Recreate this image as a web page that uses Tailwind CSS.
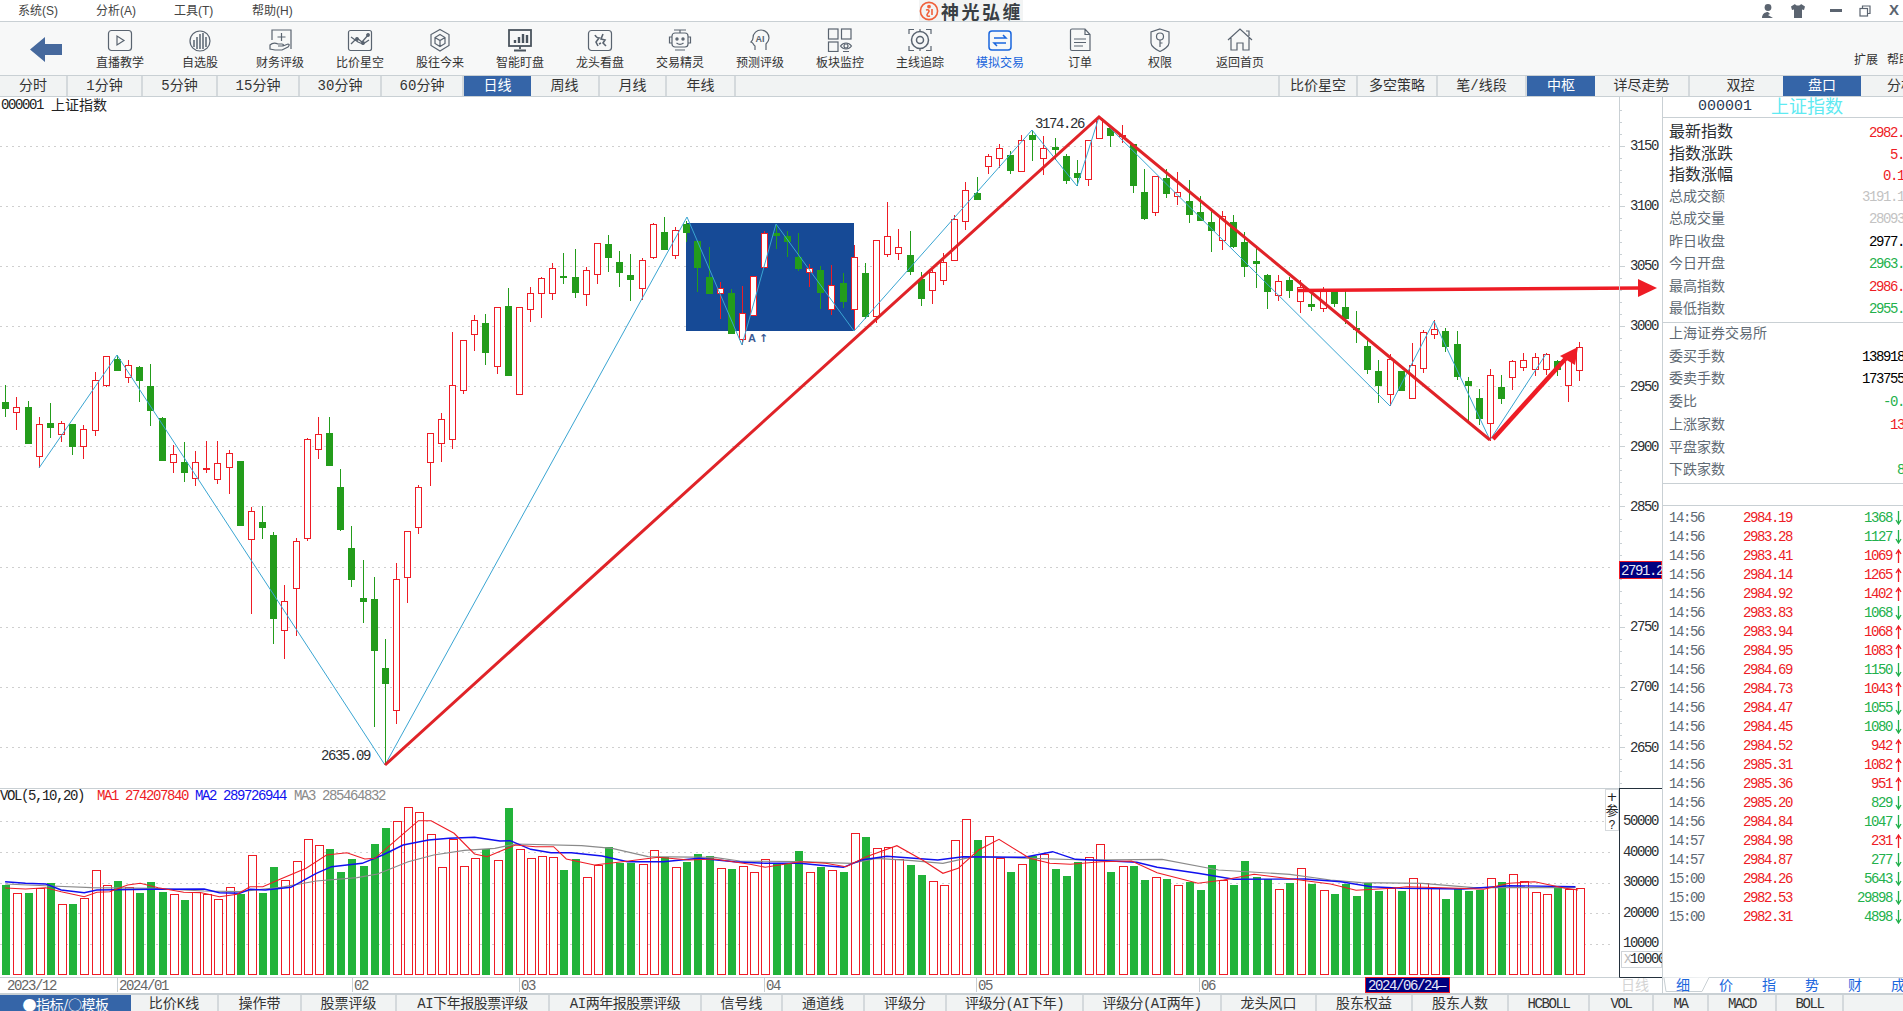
<!DOCTYPE html>
<html lang="zh">
<head>
    <meta charset="UTF-8">
    <title>神光弘缠</title>
    <script src="https://cdn.jsdelivr.net/npm/@tailwindcss/browser@4"></script>
</head>
<body class="h-[1011px] w-[1903px] overflow-hidden bg-white flex flex-col text-[#333] [font-family:'Liberation_Mono','Noto_Sans_CJK_SC',monospace]">

    <!-- menu bar -->
    <div class="h-[22px] shrink-0 flex items-center border-b border-[#c9d0d4] bg-white text-[12px] text-[#444] relative [font-family:'Liberation_Sans','Noto_Sans_CJK_SC',sans-serif]">
        <span class="w-[78px] pl-[18px]">系统(S)</span>
        <span class="w-[78px] pl-[18px]">分析(A)</span>
        <span class="w-[78px] pl-[18px]">工具(T)</span>
        <span class="w-[78px] pl-[18px]">帮助(H)</span>
        <div class="absolute left-[919px] top-0 h-[21px] flex items-center bg-[#f3f4f4]">
            <svg class="w-[20px] h-[20px]" viewBox="0 0 20 20" fill="none" stroke="#f0603a" stroke-width="1.6"><circle cx="10" cy="10" r="8.6"/><circle cx="10" cy="5.6" r="1.1" fill="#f0603a"/><path d="M7 9c3-1 4 1 2 3s-1 4 2 3M13 8v6"/></svg>
            <span class="ml-[2px] text-[18px] leading-[20px] font-bold text-[#3a3f44] tracking-[2.500px] [font-family:'Noto_Sans_CJK_SC',sans-serif]">神光弘缠</span>
        </div>
        <div class="ml-auto flex items-center">
            <svg class="w-[16px] h-[16px] mr-[14px]" viewBox="0 0 16 16" fill="#5b6470"><circle cx="8" cy="4.5" r="3.4"/><path d="M2 15c0-4 3-6 6-6l2 2-2 1 5 3z"/></svg>
            <svg class="w-[16px] h-[16px] mr-[24px]" viewBox="0 0 16 16" fill="#5b6470"><path d="M5 1 1 3.500 2 7l2-.5V15h8V6.500L14 7l1-3.500L11 1c-1 2-5 2-6 0z"/></svg>
            <span class="w-[12px] h-[3px] bg-[#5b6470] mr-[17px]"></span>
            <svg class="w-[12px] h-[12px] mr-[18px]" viewBox="0 0 12 12" fill="none" stroke="#5b6470" stroke-width="1.200"><rect x="1" y="3.500" width="7.500" height="7.500"/><path d="M3.500 3.500V1H11v7.500H8.500"/></svg>
            <span class="w-[14px] text-[15px] text-[#5b6470] font-bold">X</span>
        </div>
    </div>

    <!-- toolbar -->
    <div class="h-[54px] shrink-0 flex border-b border-[#c9d0d4] bg-[#f7f8f8] text-[12px] leading-[14px] text-[#333] [font-family:'Noto_Sans_CJK_SC',sans-serif]">
        <div class="w-[80px] shrink-0 pl-[30px] pt-[15px]">
            <svg class="w-[32px] h-[25px]" viewBox="0 0 32 25" fill="#46699d"><path d="M0 12.500 15 0v7h17v11H15v7z"/></svg>
        </div>
        <div class="w-[80px] shrink-0 flex flex-col items-center pt-[6px]">
            <svg class="w-[28px] h-[24px]" viewBox="0 0 28 24" fill="none" stroke="#5a6470" stroke-width="1.200"><rect x="2.500" y="2.500" width="23" height="20" rx="3"/><path d="M11 8v9l7-4.500z"/></svg>
            <span class="mt-[3px]">直播教学</span>
        </div>
        <div class="w-[80px] shrink-0 flex flex-col items-center pt-[6px]">
            <svg class="w-[28px] h-[24px]" viewBox="0 0 28 24" fill="none" stroke="#5a6470" stroke-width="1.200"><circle cx="14" cy="13" r="10"/><path d="M8 12v7M11 9v12M14 6v15M17 5v16M20 9v10" stroke-width="1.500"/></svg>
            <span class="mt-[3px]">自选股</span>
        </div>
        <div class="w-[80px] shrink-0 flex flex-col items-center pt-[6px]">
            <svg class="w-[28px] h-[24px]" viewBox="0 0 28 24" fill="none" stroke="#5a6470" stroke-width="1.200"><path d="M6 12V2h19v19M15.500 5v8M11.500 9h8"/><path d="M4 17c3-3 6-2 8-1h4c2 0 2 2 0 2h-4 5l5-2c2 0 1 2 0 3l-6 3H9l-5-1z"/></svg>
            <span class="mt-[3px]">财务评级</span>
        </div>
        <div class="w-[80px] shrink-0 flex flex-col items-center pt-[6px]">
            <svg class="w-[28px] h-[24px]" viewBox="0 0 28 24" fill="none" stroke="#5a6470" stroke-width="1.200"><rect x="2.500" y="2.500" width="23" height="20" rx="2"/><path d="M5 16l6-6 5 4 7-8M5 9l7 5 5 2 6-4" stroke-width="1.300"/><circle cx="11" cy="11" r="1.300" fill="#5a6470"/><circle cx="17" cy="15" r="1.300" fill="#5a6470"/><circle cx="22" cy="7" r="1.300" fill="#5a6470"/></svg>
            <span class="mt-[3px]">比价星空</span>
        </div>
        <div class="w-[80px] shrink-0 flex flex-col items-center pt-[6px]">
            <svg class="w-[28px] h-[24px]" viewBox="0 0 28 24" fill="none" stroke="#5a6470" stroke-width="1.200"><path d="M14 1.500l9 5v11l-9 5.500-9-5.500v-11z"/><path d="M14 6.500l5 3v6l-5 3-5-3v-6zM9 9.500l5 3 5-3M14 12.500v6"/></svg>
            <span class="mt-[3px]">股往今来</span>
        </div>
        <div class="w-[80px] shrink-0 flex flex-col items-center pt-[6px]">
            <svg class="w-[28px] h-[24px]" viewBox="0 0 28 24" fill="none" stroke="#4a545e" stroke-width="1.800"><rect x="3" y="2" width="22" height="16"/><path d="M14 18v3M8 22.500h12"/><path d="M9 15v-3M13 15V9M17 15V6M21 15v-8" stroke-width="2.400"/></svg>
            <span class="mt-[3px]">智能盯盘</span>
        </div>
        <div class="w-[80px] shrink-0 flex flex-col items-center pt-[6px]">
            <svg class="w-[28px] h-[24px]" viewBox="0 0 28 24" fill="none" stroke="#5a6470" stroke-width="1.200"><rect x="2.500" y="2.500" width="23" height="20" rx="3"/><path d="M9 7c1 2 2 3 4 3l-3 4 2 4M17 6l-2 5 4 1-2 3 3 3M13 16l2-1" stroke-width="1.600"/></svg>
            <span class="mt-[3px]">龙头看盘</span>
        </div>
        <div class="w-[80px] shrink-0 flex flex-col items-center pt-[6px]">
            <svg class="w-[28px] h-[24px]" viewBox="0 0 28 24" fill="none" stroke="#5a6470" stroke-width="1.200"><path d="M8 2h12M14 2v3"/><rect x="6" y="5" width="16" height="14" rx="3"/><path d="M6 9H3.500v6H6M22 9h2.500v6H22M9 22h10"/><circle cx="11" cy="11" r="1.100" fill="#5a6470"/><circle cx="17" cy="11" r="1.100" fill="#5a6470"/><path d="M10.500 15c2 1.500 5 1.500 7 0"/></svg>
            <span class="mt-[3px]">交易精灵</span>
        </div>
        <div class="w-[80px] shrink-0 flex flex-col items-center pt-[6px]">
            <svg class="w-[28px] h-[24px]" viewBox="0 0 28 24" fill="none" stroke="#5a6470" stroke-width="1.200"><path d="M9 22v-4c-2-1-1-3-4-4 1-1 2-2 2-4 0-5 4-8 8-8 5 0 8 4 8 8 0 3-2 5-3 6v6"/><text x="9.500" y="13.500" font-size="9" font-weight="bold" fill="#5a6470" stroke="none" font-family="Liberation Sans">AI</text></svg>
            <span class="mt-[3px]">预测评级</span>
        </div>
        <div class="w-[80px] shrink-0 flex flex-col items-center pt-[6px]">
            <svg class="w-[28px] h-[24px]" viewBox="0 0 28 24" fill="none" stroke="#5a6470" stroke-width="1.200"><rect x="2.500" y="1" width="9.500" height="10"/><rect x="15.500" y="1" width="9.500" height="10"/><rect x="2.500" y="14" width="9.500" height="9.500"/><path d="M14.500 18c3-4 8-4 11 0-3 4-8 4-11 0zM17 23.500h6"/><circle cx="20" cy="18" r="2"/></svg>
            <span class="mt-[3px]">板块监控</span>
        </div>
        <div class="w-[80px] shrink-0 flex flex-col items-center pt-[6px]">
            <svg class="w-[28px] h-[24px]" viewBox="0 0 28 24" fill="none" stroke="#5a6470" stroke-width="1.200"><path d="M3 6V1.500h5M20 1.500h5V6M3 18v4.500h5M20 22.500h5V18"/><circle cx="14" cy="12" r="8.500" stroke-width="1.500"/><circle cx="14" cy="12" r="3.500" stroke-width="1.500"/><path d="M14 1v3M14 20v3"/></svg>
            <span class="mt-[3px]">主线追踪</span>
        </div>
        <div class="w-[80px] shrink-0 flex flex-col items-center pt-[6px] text-[#1a66dd]">
            <svg class="w-[28px] h-[24px]" viewBox="0 0 28 24" fill="none" stroke="#1a66dd" stroke-width="1.500"><rect x="3" y="3" width="22" height="19" rx="3"/><path d="M8 10h12l-3-3M20 15H8l3 3"/></svg>
            <span class="mt-[3px]">模拟交易</span>
        </div>
        <div class="w-[80px] shrink-0 flex flex-col items-center pt-[6px]">
            <svg class="w-[28px] h-[24px]" viewBox="0 0 28 24" fill="none" stroke="#5a6470" stroke-width="1.200"><path d="M4.500 2.500c0-1 .5-1.500 1.500-1.500h13l5 5.500v16H6c-1 0-1.500-.5-1.500-1.500zM19 1v5.500h5M8 11h12M8 14.500h12M8 18h9"/></svg>
            <span class="mt-[3px]">订单</span>
        </div>
        <div class="w-[80px] shrink-0 flex flex-col items-center pt-[6px]">
            <svg class="w-[28px] h-[24px]" viewBox="0 0 28 24" fill="none" stroke="#5a6470" stroke-width="1.200"><path d="M14 1l9 3v11c0 3-5 7-9 8.500-4-1.500-9-5.500-9-8.500V4z"/><circle cx="14" cy="8.500" r="3.500"/><path d="M14 12v7M14 15h2.500"/></svg>
            <span class="mt-[3px]">权限</span>
        </div>
        <div class="w-[80px] shrink-0 flex flex-col items-center pt-[6px]">
            <svg class="w-[28px] h-[24px]" viewBox="0 0 28 24" fill="none" stroke="#5a6470" stroke-width="1.200"><path d="M2 12 14 1l12 11M5 10v12h6v-7h6v7h6V10M20 3h3v5"/></svg>
            <span class="mt-[3px]">返回首页</span>
        </div>
        <div class="ml-auto flex items-end pb-[9px] w-[49px] shrink-0 gap-[9px] whitespace-nowrap"><span>扩展</span><span>帮助</span></div>
    </div>

    <!-- period tabs -->
    <div class="h-[21px] shrink-0 flex items-stretch border-b border-[#c9d0d4] bg-[#f1f3f3] text-[14px] leading-[21px] text-[#333] text-center [font-family:'Liberation_Mono','Noto_Sans_CJK_SC',sans-serif]">
        <span class="w-[68px] shrink-0 border-r-2 border-[#d4d9dc]">分时</span>
        <span class="w-[75px] shrink-0 border-r-2 border-[#d4d9dc]">1分钟</span>
        <span class="w-[75px] shrink-0 border-r-2 border-[#d4d9dc]">5分钟</span>
        <span class="w-[82px] shrink-0 border-r-2 border-[#d4d9dc]">15分钟</span>
        <span class="w-[82px] shrink-0 border-r-2 border-[#d4d9dc]">30分钟</span>
        <span class="w-[82px] shrink-0 border-r-2 border-[#d4d9dc]">60分钟</span>
        <span class="w-[67px] shrink-0 bg-[#3565a8] text-white">日线</span>
        <span class="w-[69px] shrink-0 border-r-2 border-[#d4d9dc]">周线</span>
        <span class="w-[67px] shrink-0 border-r-2 border-[#d4d9dc]">月线</span>
        <span class="w-[69px] shrink-0 border-r-2 border-[#d4d9dc]">年线</span>
        <span class="w-[544px] shrink-0 border-r-2 border-[#d4d9dc]"></span>
        <span class="w-[78px] shrink-0 border-r-2 border-[#d4d9dc]">比价星空</span>
        <span class="w-[80px] shrink-0 border-r-2 border-[#d4d9dc]">多空策略</span>
        <span class="w-[89px] shrink-0 border-r-2 border-[#d4d9dc]">笔/线段</span>
        <span class="w-[68px] shrink-0 bg-[#3565a8] text-white">中枢</span>
        <span class="w-[95px] shrink-0 border-r-2 border-[#d4d9dc]">详尽走势</span>
        <span class="w-[93px] shrink-0 pl-[8px]">双控</span>
        <span class="w-[78px] shrink-0 bg-[#3565a8] text-white">盘口</span>
        <span class="w-[80px] shrink-0">分析</span>
    </div>

    <!-- main area -->
    <div class="flex-1 flex min-h-0">
        <div class="w-[1662px] shrink-0 h-[896px]">
            <svg id="chart" class="block w-[1662px] h-[896px]" viewBox="0 97 1662 896"></svg>
        </div>

        <!-- quote panel -->
        <div class="w-[256px] shrink-0 h-[896px] flex flex-col border-l border-[#c9d0d4] text-[#606a74] [font-family:'Liberation_Mono','Noto_Sans_CJK_SC',monospace]">
            <div class="h-[21px] shrink-0 flex items-center border-b border-[#c9d0d4] pl-[35px] pt-[1px]">
                <span class="text-[15px] text-[#2a3a55]">000001</span>
                <span class="ml-[19px] text-[18px] leading-[20px] text-[#5feaf2]">上证指数</span>
            </div>
            <div class="h-[67.500px] shrink-0 pt-[5px] text-[16px] leading-[21.500px] text-[#2b2f33]">
                <div class="flex justify-between pl-[6px]"><span>最新指数</span><span class="text-[14px] tracking-[-1.400px] text-[#ee1c25]">2982.31</span></div>
                <div class="flex justify-between pl-[6px]"><span>指数涨跌</span><span class="text-[14px] tracking-[-1.400px] text-[#ee1c25]">5.22</span></div>
                <div class="flex justify-between pl-[6px]"><span>指数涨幅</span><span class="text-[14px] tracking-[-1.400px] text-[#ee1c25]">0.18%</span></div>
            </div>
            <div class="text-[14px] leading-[22.600px] border-b border-[#c9d0d4] pb-[1px]">
                <div class="flex justify-between pl-[6px]"><span>总成交额</span><span class="tracking-[-1.400px] text-[#c3c3c3]">3191.194</span></div>
                <div class="flex justify-between pl-[6px]"><span>总成交量</span><span class="tracking-[-1.400px] text-[#c3c3c3]">2809378</span></div>
                <div class="flex justify-between pl-[6px]"><span>昨日收盘</span><span class="tracking-[-1.400px] text-black">2977.15</span></div>
                <div class="flex justify-between pl-[6px]"><span>今日开盘</span><span class="tracking-[-1.400px] text-[#22b14c]">2963.23</span></div>
                <div class="flex justify-between pl-[6px]"><span>最高指数</span><span class="tracking-[-1.400px] text-[#ee1c25]">2986.56</span></div>
                <div class="flex justify-between pl-[6px]"><span>最低指数</span><span class="tracking-[-1.400px] text-[#22b14c]">2955.84</span></div>
            </div>
            <div class="text-[14px] leading-[22.700px] border-b border-[#c9d0d4] pb-[1px]">
                <div class="pl-[6px]">上海证券交易所</div>
                <div class="flex justify-between pl-[6px]"><span>委买手数</span><span class="tracking-[-1.400px] text-black">13891800</span></div>
                <div class="flex justify-between pl-[6px]"><span>委卖手数</span><span class="tracking-[-1.400px] text-black">17375500</span></div>
                <div class="flex justify-between pl-[6px]"><span>委比</span><span class="tracking-[-1.400px] text-[#22b14c]">-0.11</span></div>
                <div class="flex justify-between pl-[6px]"><span>上涨家数</span><span class="tracking-[-1.400px] text-[#ee1c25]">1358</span></div>
                <div class="pl-[6px]">平盘家数</div>
                <div class="flex justify-between pl-[6px]"><span>下跌家数</span><span class="tracking-[-1.400px] text-[#22b14c]">821</span></div>
            </div>
            <div class="h-[22px] shrink-0 border-b border-[#c9d0d4]"></div>
            <div id="trades" class="pt-[3px] text-[14px] leading-[19px]"></div>

            <!-- panel tabs -->
            <div class="mt-auto h-[16px] shrink-0 relative flex border-t border-[#c9d0d4] pl-[13px] text-[14px] leading-[16px] text-[#1a66dd]">
                <svg class="absolute left-0 top-[-1px] w-[50px] h-[17px]" viewBox="0 0 50 17" fill="#fff" stroke="#c9d0d4"><path d="M0 0.500 2 14.500h37L46 0.500z" stroke="none"/><path d="M1 1 3 14.500h36L46 0.500"/></svg>
                <span class="w-[43px] shrink-0 relative">细</span>
                <span class="w-[43px] shrink-0">价</span>
                <span class="w-[43px] shrink-0">指</span>
                <span class="w-[43px] shrink-0">势</span>
                <span class="w-[43px] shrink-0">财</span>
                <span class="w-[43px] shrink-0">成</span>
            </div>
        </div>
    </div>

    <!-- bottom indicator tabs -->
    <div class="h-[18px] shrink-0 flex items-stretch border-t-2 border-[#c9d0d4] bg-[#f1f3f3] text-[14px] leading-[19px] text-center text-[#333] whitespace-nowrap overflow-hidden [font-family:'Liberation_Mono','Noto_Sans_CJK_SC',sans-serif]">
        <span class="w-[131px] shrink-0 bg-[#3565a8] text-white tracking-[-0.500px] [font-family:'Noto_Sans_CJK_SC',sans-serif]">●指标/○模板</span>
        <span class="w-[88px] shrink-0 border-r-2 border-[#d4d9dc]">比价K线</span>
        <span class="w-[83px] shrink-0 border-r-2 border-[#d4d9dc]">操作带</span>
        <span class="w-[95px] shrink-0 border-r-2 border-[#d4d9dc]">股票评级</span>
        <span class="w-[153px] shrink-0 border-r-2 border-[#d4d9dc] tracking-[-0.500px]">AI下年报股票评级</span>
        <span class="w-[152px] shrink-0 border-r-2 border-[#d4d9dc] tracking-[-0.500px]">AI两年报股票评级</span>
        <span class="w-[81px] shrink-0 border-r-2 border-[#d4d9dc]">信号线</span>
        <span class="w-[82px] shrink-0 border-r-2 border-[#d4d9dc]">通道线</span>
        <span class="w-[82px] shrink-0 border-r-2 border-[#d4d9dc]">评级分</span>
        <span class="w-[137px] shrink-0 border-r-2 border-[#d4d9dc] tracking-[-0.500px]">评级分(AI下年)</span>
        <span class="w-[138px] shrink-0 border-r-2 border-[#d4d9dc] tracking-[-0.500px]">评级分(AI两年)</span>
        <span class="w-[95px] shrink-0 border-r-2 border-[#d4d9dc]">龙头风口</span>
        <span class="w-[96px] shrink-0 border-r-2 border-[#d4d9dc]">股东权益</span>
        <span class="w-[96px] shrink-0 border-r-2 border-[#d4d9dc]">股东人数</span>
        <span class="w-[81px] shrink-0 border-r-2 border-[#d4d9dc] tracking-[-1.400px]">HCBOLL</span>
        <span class="w-[64px] shrink-0 border-r-2 border-[#d4d9dc] tracking-[-1.400px]">VOL</span>
        <span class="w-[55px] shrink-0 border-r-2 border-[#d4d9dc] tracking-[-1.400px]">MA</span>
        <span class="w-[68px] shrink-0 border-r-2 border-[#d4d9dc] tracking-[-1.400px]">MACD</span>
        <span class="w-[67px] shrink-0 border-r-2 border-[#d4d9dc] tracking-[-1.400px]">BOLL</span>
    </div>

    <script>
        // r / g, wick top, body top, body bottom, wick bottom (page pixels)
        const candles = [
            ['g',385,402,409,417],['r',397,407,412,430],['g',401,407,444,444],['r',417,424,456,468],['g',403,423,428,438],
            ['r',421,423,434,442],['g',424,424,447,455],['r',425,429,446,459],['r',372,380,430,436],['r',356,356,385,387],
            ['g',355,359,371,371],['r',360,365,377,383],['g',366,367,381,402],['g',364,386,411,426],['g',417,418,461,461],
            ['r',445,454,462,473],['g',442,462,473,482],['r',451,462,478,486],['r',441,468,470,473],['r',441,463,479,484],
            ['r',450,453,467,494],['g',461,461,526,526],['r',507,511,539,614],['g',506,522,528,539],['g',532,535,619,644],
            ['r',585,601,630,659],['r',538,541,588,636],['r',438,439,538,541],['r',417,434,449,459],['g',417,433,466,466],
            ['g',469,487,530,531],['g',526,548,580,587],['g',560,598,602,623],['g',577,599,651,727],['g',639,668,684,765],
            ['r',563,579,710,724],['r',531,531,577,603],['r',485,487,527,534],['r',433,433,462,486],['r',413,419,443,462],
            ['r',332,385,439,449],['r',340,340,390,394],['r',315,320,334,351],['g',314,323,353,365],['r',307,307,366,374],
            ['g',288,306,376,376],['r',307,307,394,395],['r',287,293,309,322],['r',277,278,293,318],['r',263,268,293,300],
            ['g',253,276,278,284],['g',249,277,293,298],['r',267,270,294,306],['r',243,243,274,284],['g',235,244,258,272],
            ['g',251,262,273,287],['g',254,275,280,301],['r',258,260,288,300],['r',223,224,257,259],['g',217,232,250,250],
            ['r',227,230,255,259],['g',221,224,233,242],['g',240,241,268,292],['g',247,277,294,294],['r',282,288,293,319],
            ['g',289,293,334,334],['r',286,313,339,345],['r',276,276,315,315],['r',231,233,267,267],['g',225,233,236,249],
            ['g',231,236,242,257],['g',233,257,269,271],['r',264,268,272,287],['g',266,270,293,309],['r',265,285,309,315],
            ['g',273,283,302,308],['r',245,257,309,331],['g',263,273,317,319],['r',240,240,316,323],['r',202,236,254,257],
            ['r',229,247,253,260],['g',231,255,272,275],['g',272,279,299,306],['r',270,272,290,304],['r',253,262,280,285],
            ['r',215,219,260,261],['r',182,190,221,230],['g',177,193,200,200],['r',154,156,166,174],['r',144,148,158,168],
            ['g',151,155,171,174],['r',135,140,171,172],['g',130,135,140,161],['r',136,148,158,175],['g',138,147,150,160],
            ['g',154,156,181,184],['g',160,173,178,186],['r',140,140,179,186],['r',116,118,138,139],['g',128,128,136,147],
            ['r',125,135,137,143],['g',144,144,186,193],['g',169,192,219,220],['r',176,176,212,216],['g',169,178,194,198],
            ['r',172,192,196,205],['g',180,201,215,223],['g',196,212,221,221],['g',209,222,231,252],['r',211,216,240,250],
            ['g',215,222,247,248],['g',232,242,267,277],['g',247,261,264,288],['g',274,275,292,309],['r',275,281,295,301],
            ['g',277,280,291,298],['r',280,287,301,313],['g',290,304,307,311],['r',287,291,308,312],['g',290,290,304,307],
            ['g',290,307,319,324],['g',311,328,329,343],['g',337,346,370,374],['g',360,371,386,403],['r',354,359,394,406],
            ['g',371,371,391,391],['r',343,365,398,399],['r',330,332,368,373],['r',320,329,334,339],['g',328,331,347,352],
            ['g',331,344,377,380],['g',377,381,386,423],['g',389,398,419,425],['r',369,375,423,441],['g',375,387,399,404],
            ['r',360,361,377,390],['r',353,360,367,371],['r',353,357,369,376],['r',353,354,369,375],['g',360,361,370,376],
            ['r',354,358,385,402],['r',342,347,370,381]
        ];
        // volume bar tops, as read from the lower panel
        const volTops = [315,340,339,325,310,373,372,355,270,316,303,322,339,306,336,343,360,337,343,358,322,342,226,339,261,300,244,178,196,207,276,237,258,192,144,124,82,97,163,262,176,259,235,206,241,84,208,235,229,232,270,237,292,254,201,248,250,252,211,230,262,245,222,228,265,268,258,276,238,250,250,213,277,261,271,276,160,171,204,202,238,255,285,304,316,181,118,180,169,235,276,253,228,221,267,288,246,232,193,276,259,258,300,292,297,316,306,330,255,300,315,243,292,297,328,309,265,312,331,342,312,348,309,333,325,333,295,309,325,357,327,333,330,295,306,283,303,337,343,322,328,325];
        const ma1 = [[10,324],[50,327],[90,323],[120,335],[165,350],[190,337],[215,335],[250,315],[275,310],[310,323],[360,337],[395,338],[430,350],[465,343],[490,320],[515,320],[550,297],[600,265],[640,225],[680,218],[715,237],[735,235],[780,175],[820,122],[845,122],[890,160],[930,222],[955,230],[1010,195],[1050,200],[1085,200],[1110,237],[1165,255],[1220,245],[1290,232],[1350,240],[1400,237],[1470,253],[1500,262],[1568,245],[1618,250],[1658,260],[1698,230],[1758,197],[1808,240],[1848,280],[1878,265],[1918,210],[1958,178],[2018,235],[2058,250],[2098,253],[2158,245],[2218,243],[2268,278],[2348,310],[2398,300],[2458,283],[2548,300],[2608,312],[2658,331],[2728,325],[2758,320],[2858,325],[2908,328],[2958,310],[3008,305],[3068,325],[3093,330]];
        const ma2 = [[10,305],[50,310],[90,312],[120,330],[165,338],[190,330],[300,328],[400,327],[430,338],[470,340],[490,328],[520,330],[570,322],[620,280],[650,260],[710,250],[750,225],[790,195],[840,180],[880,175],[930,172],[980,183],[1000,182],[1040,208],[1080,218],[1120,218],[1180,228],[1230,245],[1300,245],[1370,235],[1440,245],[1500,250],[1568,250],[1608,256],[1653,262],[1688,240],[1738,229],[1838,240],[1888,230],[2008,232],[2063,215],[2108,238],[2228,247],[2268,262],[2348,280],[2418,298],[2558,297],[2628,305],[2688,320],[2748,325],[2868,327],[2958,317],[3088,320]];
        const ma3 = [[10,312],[100,318],[180,323],[300,325],[400,333],[470,335],[550,322],[620,303],[700,293],[740,282],[800,245],[850,225],[910,211],[970,205],[1010,192],[1140,197],[1200,205],[1270,230],[1400,232],[1450,243],[1568,245],[1668,250],[1718,235],[1788,242],[1848,250],[1908,230],[2128,240],[2278,238],[2388,270],[2528,283],[2608,300],[2668,308],[2788,310],[2888,323],[3088,323]];
        // zigzag and the hand-drawn lines
        const zigzag = [[39,468],[117,355],[385,765],[687,217],[742,345],[776,224],[854,331],[1032,130],[1077,186],[1099,117],[1390,406],[1434,321],[1490,440],[1546,354]];

        const RED = '#ee1c25', GREEN = '#239c1b', VGREEN = '#22b33a';
        const cx = i => Math.round(5.33 + 11.163 * i);
        const zx = z => (z / 1.96).toFixed(1);
        const zy = z => (780 + z / 3).toFixed(1);
        const txt = (x, y, s, fill, anchor) => `<text x="${x}" y="${y}" fill="${fill}" text-anchor="${anchor || 'start'}" font-family="Liberation Mono" font-size="14" letter-spacing="-1.4">${s}</text>`;

        let s = '';
        // grid
        s += '<g stroke="#cfcfcf" stroke-dasharray="2 4">';
        for (let i = 0; i < 11; i++) {
            const y = Math.round(145.5 + i * 60.15) + .5;
            s += `<path d="M0 ${y}H1612"/>`;
        }
        [821, 852, 883, 913, 944].forEach(y => { s += `<path d="M0 ${y}.5H1612"/>`; });
        s += '</g>';
        s += '<rect x="686" y="223" width="168" height="108" fill="#164a96"/>';

        // candles
        s += '<g shape-rendering="crispEdges">';
        candles.forEach((c, i) => {
            const x = cx(i), col = c[0] === 'r' ? RED : GREEN;
            s += `<rect x="${x}" y="${c[1]}" width="1" height="${c[4] - c[1]}" fill="${col}"/>`;
            if (c[0] === 'g' || c[3] - c[2] < 3) s += `<rect x="${x - 3}" y="${c[2]}" width="7" height="${Math.max(c[3] - c[2], 2)}" fill="${col}"/>`;
            else s += `<rect x="${x - 3}.5" y="${c[2]}.5" width="6" height="${c[3] - c[2]}" fill="#fff" stroke="${col}"/>`;
        });
        s += '</g>';

        // zigzag, trend lines, arrows
        s += `<polyline fill="none" stroke="#3aa5d2" points="${zigzag.map(p => p.join(',')).join(' ')}"/>`;
        s += '<polyline fill="none" stroke="#e02328" stroke-width="3" points="385,765 1099,117 1490,440"/>';
        s += `<path d="M1298 290.500 1642 288" stroke="${RED}" stroke-width="3.500"/><path d="M1638 279 1657 288 1638 297z" fill="${RED}"/>`;
        s += `<path d="M1493 439 1568 356" stroke="${RED}" stroke-width="4.500"/><path d="M1578 347 1560 356 1575 365z" fill="${RED}"/>`;
        s += '<text x="748" y="342" font-family="Liberation Sans" font-weight="bold" font-size="11" fill="#3b5a93">A</text><text x="759" y="342" font-family="DejaVu Sans" font-weight="bold" font-size="11" fill="#3b5a93">↑</text>';
        s += txt(1035, 128, '3174.26', '#2b2f33') + txt(321, 760, '2635.09', '#2b2f33');
        s += `<text x="1" y="109" fill="#222" font-size="14" font-family="Liberation Mono" letter-spacing="-1.4">000001</text><text x="51" y="110" fill="#222" font-size="14" font-family="Noto Sans CJK SC">上证指数</text>`;

        // price axis
        s += '<g stroke="#c9d0d4" shape-rendering="crispEdges"><path d="M1619.500 97V788"/>';
        for (let i = 0; i < 57; i++) {
            const y = Math.round(109.5 + i * 12.03) + .5;
            s += `<path d="M1620 ${y}H${(i - 3) % 5 === 0 ? 1625 : 1622}"/>`;
        }
        s += '</g>';
        [3150, 3100, 3050, 3000, 2950, 2900, 2850, 2800, 2750, 2700, 2650].forEach((p, i) => {
            if (p !== 2800) s += txt(1658, Math.round(150 + i * 60.15), p, '#2b2f33', 'end');
        });
        s += `<rect x="1619.500" y="561.500" width="42" height="17" fill="#000080" stroke="${RED}"/>` + txt(1621, 575, '2791.2', '#e8e8f8');

        // volume panel
        s += '<path d="M0 788.500H1619" stroke="#c9d0d4"/><path d="M1619.500 788V977.500H1662M1619 788.500H1662" fill="none" stroke="#23303c"/>';
        s += '<path d="M0 977.500H1619" stroke="#c9d0d4"/>';
        s += '<g shape-rendering="crispEdges">';
        volTops.forEach((t, i) => {
            const top = Math.round(780 + t / 3), x = cx(i), r = candles[i][0] === 'r';
            s += r ? `<rect x="${x - 3}.5" y="${top}.5" width="8" height="${974 - top}" fill="#fff" stroke="${RED}"/>`
                   : `<rect x="${x - 3}" y="${top}" width="8" height="${975 - top}" fill="${VGREEN}"/>`;
        });
        s += '</g>';
        [[ma3, '#8a8a8a', 1.2], [ma2, '#1010ee', 1.4], [ma1, RED, 1.1]].forEach(l => {
            s += `<polyline fill="none" stroke="${l[1]}" stroke-width="${l[2]}" points="${l[0].map(p => zx(p[0]) + ',' + zy(p[1])).join(' ')}"/>`;
        });
        s += txt(0, 800, 'VOL(5,10,20)', '#222') + txt(97, 800, 'MA1 274207840', RED) + txt(195, 800, 'MA2 289726944', '#1010ee') + txt(294, 800, 'MA3 285464832', '#8a8a8a');
        [50000, 40000, 30000, 20000, 10000].forEach((v, i) => { s += txt(1658, [825, 856, 886, 917, 947][i], v, '#2b2f33', 'end'); });
        s += '<rect x="1621.500" y="951.500" width="40" height="16" fill="#fff" stroke="#d0d4d8"/><text x="1624" y="963" fill="#bbb" font-size="13" font-family="Liberation Mono">X</text>' + txt(1630, 963, '10000', '#2b2f33');
        s += '<rect x="1605.500" y="789.500" width="13" height="41" fill="#fff" stroke="#d6dadd"/><text x="1612" y="801" text-anchor="middle" font-size="13" fill="#222" font-family="DejaVu Sans">+</text><text x="1612" y="815" text-anchor="middle" font-size="13" fill="#222" font-family="Noto Sans CJK SC">参</text><text x="1612" y="829" text-anchor="middle" font-size="12" fill="#222" font-family="Liberation Mono">?</text>';

        // time axis
        [[7, '2023/12'], [119, '2024/01'], [354, '02'], [521, '03'], [766, '04'], [978, '05'], [1201, '06']].forEach((t, i) => {
            if (i) s += `<path d="M${t[0] - 2}.5 978V992" stroke="#c9d0d4"/>`;
            s += txt(t[0], 990, t[1], '#666');
        });
        s += `<rect x="1365.500" y="977.500" width="84" height="15" fill="#000080" stroke="${RED}"/>` + txt(1368, 990, '2024/06/24—', '#e8e8f8');
        s += '<text x="1621" y="990" font-size="14" fill="#d4d4d4" font-family="Noto Sans CJK SC">日线</text>';
        document.getElementById('chart').innerHTML = s;

        // trade list
        const trades = [
            ['14:56','2984.19',1368,0],['14:56','2983.28',1127,0],['14:56','2983.41',1069,1],['14:56','2984.14',1265,1],
            ['14:56','2984.92',1402,1],['14:56','2983.83',1068,0],['14:56','2983.94',1068,1],['14:56','2984.95',1083,1],
            ['14:56','2984.69',1150,0],['14:56','2984.73',1043,1],['14:56','2984.47',1055,0],['14:56','2984.45',1080,0],
            ['14:56','2984.52',942,1],['14:56','2985.31',1082,1],['14:56','2985.36',951,1],['14:56','2985.20',829,0],
            ['14:56','2984.84',1047,0],['14:57','2984.98',231,1],['14:57','2984.87',277,0],['15:00','2984.26',5643,0],
            ['15:00','2982.53',29898,0],['15:00','2982.31',4898,0]
        ];
        document.getElementById('trades').innerHTML = trades.map(t => {
            const col = t[3] ? '#ee1c25' : '#22b14c';
            const arrow = t[3] ? 'M3.500 14V1M1 5l2.500-4L6 5' : 'M3.500 0v13M1 9l2.500 4L6 9';
            return `
            <div class="flex items-center h-[19px] tracking-[-1.400px]">
                <span class="w-[80px] shrink-0 pl-[6px]">${t[0]}</span>
                <span class="w-[70px] shrink-0 text-[#ee1c25]">${t[1]}</span>
                <span class="w-[79px] shrink-0 text-right ${t[3] ? 'text-[#ee1c25]' : 'text-[#22b14c]'}">${t[2]}</span>
                <svg class="w-[7px] h-[14px] ml-[3px] shrink-0" viewBox="0 0 7 14" fill="none" stroke="${col}" stroke-width="1.300"><path d="${arrow}"/></svg>
            </div>`;
        }).join('');
    </script>
</body>
</html>
